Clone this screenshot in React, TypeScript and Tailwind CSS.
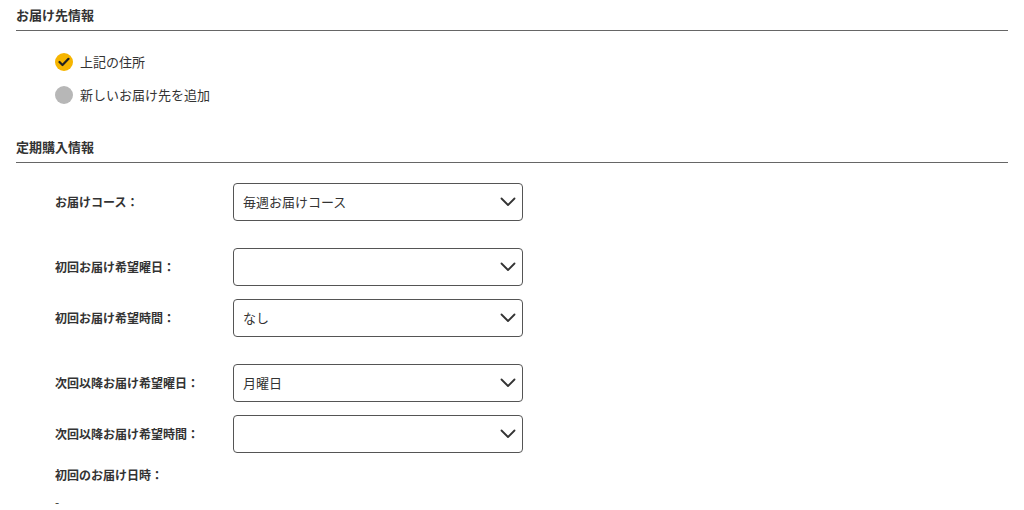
import React from "react";

const font = { fontFamily: '"Noto Sans CJK JP", "Noto Sans", sans-serif' };

function Chevron() {
  return (
    <svg width="16" height="10" viewBox="0 0 16 10" className="shrink-0">
      <path d="M1.5 1.5 L8 8 L14.5 1.5" fill="none" stroke="#333" strokeWidth="1.8" strokeLinecap="round" strokeLinejoin="round" />
    </svg>
  );
}

function Select({ value }: { value: string }) {
  return (
    <div className="w-[290px] h-[38px] border border-[#555] rounded-[4px] flex items-center justify-between pl-[9px] pr-[6px] bg-white">
      <span className="text-[13px] text-[#333] leading-[20px]">{value}</span>
      <Chevron />
    </div>
  );
}

function Row({ label, value, mt }: { label: string; value: string; mt: string }) {
  return (
    <div className={`flex items-center ${mt}`}>
      <div className="w-[178px] text-[12px] font-bold text-[#333] leading-[20px]">{label}</div>
      <Select value={value} />
    </div>
  );
}

export default function App() {
  return (
    <div className="w-[1024px] h-[510px] bg-white overflow-hidden px-4" style={font}>
      <h2 className="text-[13px] font-bold text-[#333] leading-[20px] pt-[5px] pb-[5px] border-b border-[#666]">お届け先情報</h2>
      <div className="pl-[39px] mt-[21px] flex flex-col gap-[13px]">
        <div className="flex items-center gap-[7px] h-[20px]">
          <span className="w-[18px] h-[18px] rounded-full bg-[#f6b500] flex items-center justify-center">
            <svg width="12" height="10" viewBox="0 0 12 10">
              <path d="M1.5 5 L4.5 8 L10.5 1.8" fill="none" stroke="#222" strokeWidth="2.2" strokeLinecap="round" strokeLinejoin="round" />
            </svg>
          </span>
          <span className="text-[13px] text-[#333] leading-[20px]">上記の住所</span>
        </div>
        <div className="flex items-center gap-[7px] h-[20px]">
          <span className="w-[18px] h-[18px] rounded-full bg-[#b7b7b7]" />
          <span className="text-[13px] text-[#333] leading-[20px]">新しいお届け先を追加</span>
        </div>
      </div>
      <h2 className="mt-[27px] text-[13px] font-bold text-[#333] leading-[20px] pt-[5px] pb-[5px] border-b border-[#666]">定期購入情報</h2>
      <div className="pl-[39px]">
        <Row label="お届けコース：" value="毎週お届けコース" mt="mt-[20px]" />
        <Row label="初回お届け希望曜日：" value="" mt="mt-[27px]" />
        <Row label="初回お届け希望時間：" value="なし" mt="mt-[13px]" />
        <Row label="次回以降お届け希望曜日：" value="月曜日" mt="mt-[27px]" />
        <Row label="次回以降お届け希望時間：" value="" mt="mt-[13px]" />
        <div className="mt-[12px] text-[12px] font-bold text-[#333] leading-[20px]">初回のお届け日時：</div>
        <div className="mt-[7px] text-[12px] text-[#333] leading-[20px]">-</div>
      </div>
    </div>
  );
}
